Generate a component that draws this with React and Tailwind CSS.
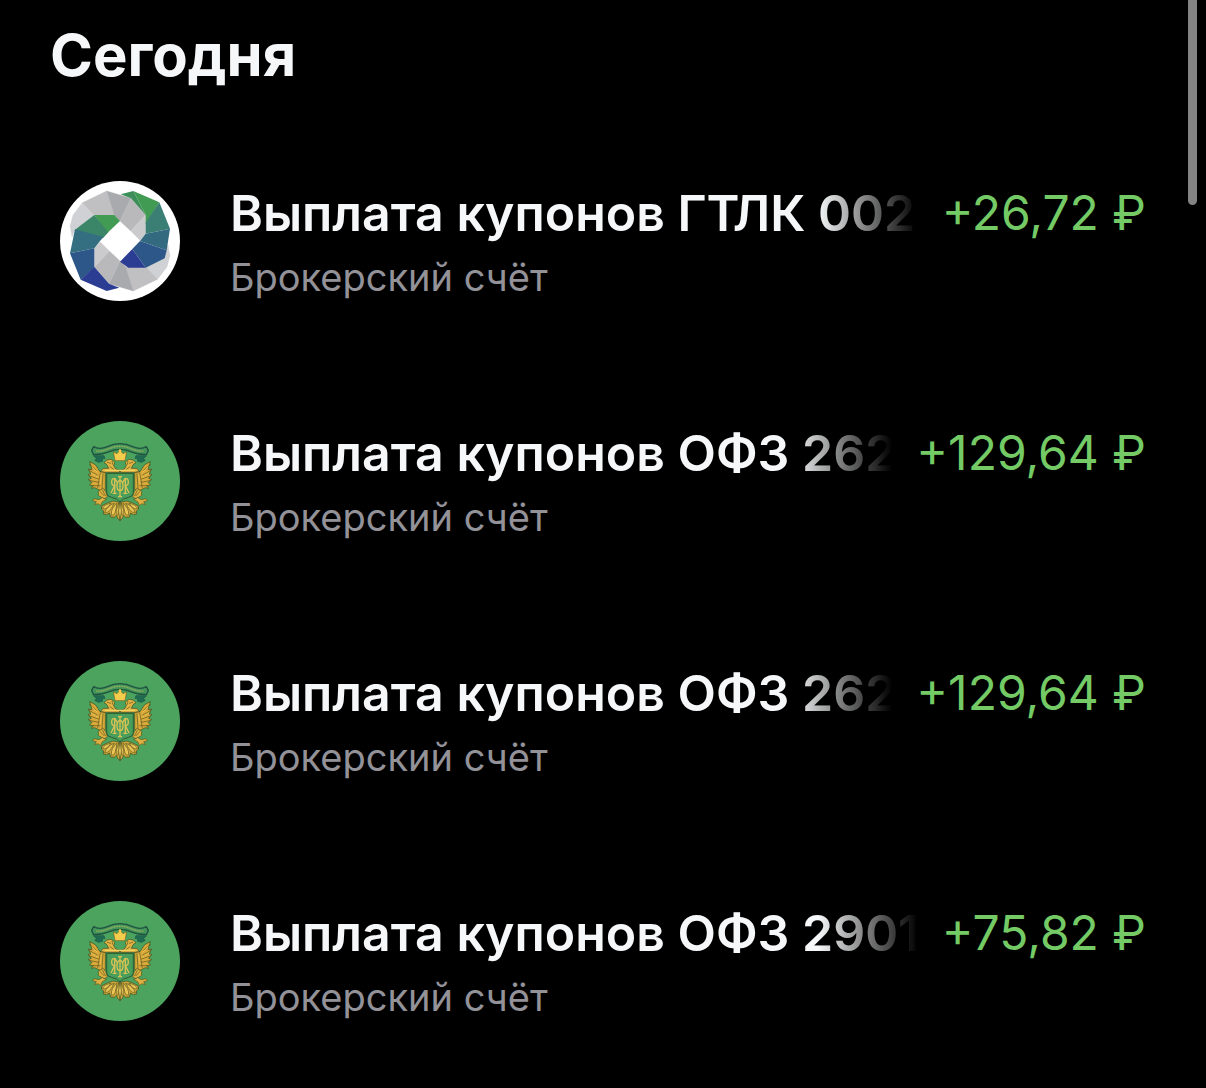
const payouts = [
  { id: 1, title: "Выплата купонов ГТЛК 002Р", account: "Брокерский счёт", amount: "+26,72 ₽", logo: "gtlk" },
  { id: 2, title: "Выплата купонов ОФЗ 262", account: "Брокерский счёт", amount: "+129,64 ₽", logo: "ofz" },
  { id: 3, title: "Выплата купонов ОФЗ 262", account: "Брокерский счёт", amount: "+129,64 ₽", logo: "ofz" },
  { id: 4, title: "Выплата купонов ОФЗ 2901", account: "Брокерский счёт", amount: "+75,82 ₽", logo: "ofz" },
];

// Half of the grey band, the other half is the same turned by 180°
function GreyBand() {
  return (
    <g strokeWidth="1" strokeLinejoin="round">
      <path d="M97 95 L133 133 L76 177 L66 198 L60 166 L69 132Z" fill="#d0d1d5" stroke="#d0d1d5" />
      <path d="M97 95 L170 60 L193 133 H133Z" fill="#c0c0c3" stroke="#c0c0c3" />
      <path d="M170 60 L243 82 L210 150 L193 133Z" fill="#a9aaad" stroke="#a9aaad" />
      <path d="M243 82 L287 132 L242 180 L210 150Z" fill="#b9b9bc" stroke="#b9b9bc" />
      <path d="M287 132 V188 L270 208 L242 180Z" fill="#cbcbce" stroke="#cbcbce" />
    </g>
  );
}

function GtlkLogo() {
  return (
    <svg viewBox="30 30 360 360" className="size-[120px] shrink-0" aria-hidden="true">
      <circle cx="210" cy="210" r="180" fill="#fff" />
      <GreyBand />
      <g transform="rotate(180 210 210)">
        <GreyBand />
      </g>
      {/* Right blade */}
      <path d="M212 70 L250 60 L287 132 L243 82Z" fill="#3c8e58" />
      <path d="M250 60 L328 94 L287 160 V132Z" fill="#429b53" />
      <path d="M328 94 L360 173 L287 188 V155Z" fill="#3b7f74" />
      <path d="M360 173 L350 238 L270 210 L287 188Z" fill="#336a80" />
      <path d="M350 238 L344 262 L287 290 L247 234 L270 210Z" fill="#2c5788" />
      <path d="M247 234 L287 290 H235 L210 272Z" fill="#2b3d92" />
      {/* Left blade */}
      <path d="M133 132 H193 L210 150 L172 186Z" fill="#429b53" />
      <path d="M133 132 L175 184 L160 200 L74 177Z" fill="#3b8669" />
      <path d="M75 175 L161 198 L150 210 L133 232 L60 247Z" fill="#336f80" />
      <path d="M133 232 V290 L92 326 L60 247Z" fill="#2c5788" />
      <path d="M133 288 L177 338 L208 350 L170 360 L92 326Z" fill="#2b3d92" />
    </svg>
  );
}

// Wing, leg and tail feathers of one side of the eagle
function EagleHalf() {
  return (
    <g stroke="#59591f" strokeWidth="2" strokeLinejoin="round" strokeLinecap="round">
      <path d="M131 134 L162 134 L165 142 L156 144 L158 151 L145 154 L134 148 L139 143Z" fill="#1f6c52" stroke="#1d5a47" />
      <path d="M120 152 L137 162 L146 176 L150 182 L166 183 L166 236 L150 238 L134 230 L124 232 L130 224 L118 222 L126 214 L115 206 L124 202 L114 190 L123 189 L115 174 L125 176Z" fill="#d9a93a" stroke="#3f4a1e" />
      <path d="M118 160 L139 178 M117 178 L142 192 M117 194 L145 204 M120 209 L148 214 M128 224 L150 224 M151 186 L143 230 M159 188 L156 234" fill="none" />
      <path d="M126 168 L142 184 M124 186 L142 198 M154 190 L150 218" fill="none" stroke="#f0cc5c" />
      <path d="M152 181 L160 172 L176 172 L170 160 L162 155 L171 147 L184 145 L194 154 L191 164 L197 174 L209 178 V184 H166Z" fill="#e3b443" stroke="#3f4a1e" />
      <path d="M172 154 L182 157 M180 167 L192 176 M186 150 L188 160" fill="none" />
      <path d="M166 178 H209" fill="none" stroke="#f4d264" strokeWidth="4" />
      <path d="M146 240 L160 232 L168 244 L172 258 L160 264 L154 258 L146 254Z" fill="#e0b040" />
      <path d="M151 242 L162 254 M158 238 L166 254" fill="none" />
      <path d="M156 260 L147 266 L132 263 L128 270 L139 272 L134 281 L145 278 L151 284 L157 272 L168 266Z" fill="#e0b040" />
      <path d="M209 274 L190 270 L172 276 L156 284 L154 294 L161 300 L160 309 L170 311 L178 306 L182 318 L193 319 L199 313 L203 322 L209 328Z" fill="#cfa53a" stroke="#3f4a1e" />
      <g fill="#efc653">
        <path d="M206 276 Q196 296 201 312 Q206 316 207 300Z" />
        <path d="M200 277 Q182 292 184 312 Q194 316 197 298Z" />
        <path d="M192 277 Q170 286 164 306 Q176 306 184 292Z" />
        <path d="M182 277 Q164 280 157 292 Q164 298 174 288Z" />
      </g>
    </g>
  );
}

function OfzLogo() {
  return (
    <svg viewBox="30 30 360 360" className="size-[120px] shrink-0" aria-hidden="true">
      <circle cx="210" cy="210" r="180" fill="#4ba35e" />
      <EagleHalf />
      <g transform="matrix(-1 0 0 1 420 0)">
        <EagleHalf />
      </g>
      <path d="M210 274 Q202 300 210 326 Q218 300 210 274Z" fill="#f4d264" stroke="#59591f" strokeWidth="2" />
      {/* Ribbon */}
      <path
        d="M131 107 Q148 117 172 107 Q190 98 210 98 Q230 98 248 107 Q272 117 289 107 L295 118 L290 130 Q270 132 248 124 Q228 115 210 115 Q192 115 172 124 Q150 132 130 130 L125 118Z"
        fill="#43965a"
        stroke="#1f5140"
        strokeWidth="4"
        strokeLinejoin="round"
      />
      <path d="M139 120 Q155 122 174 114 Q192 106 210 106 Q228 106 246 114 Q265 122 281 120" fill="none" stroke="#a9b65c" strokeWidth="4" strokeDasharray="3 2" />
      {/* Crown */}
      <path
        d="M190 122 L201 128 L210 116 L219 128 L230 122 L225 149 H195Z"
        fill="#f6cc4c"
        stroke="#6b5f22"
        strokeWidth="2"
        strokeLinejoin="round"
      />
      <circle cx="210" cy="119" r="4" fill="#f6cc4c" />
      <path d="M197 151 H223 V160 Q210 174 197 160Z" fill="#4ba35e" />
      {/* Shield with the monogram */}
      <path
        d="M170 187 H250 V246 Q248 257 236 259 Q218 262 210 273 Q202 262 184 259 Q172 257 170 246Z"
        fill="#489e5a"
        stroke="#2c5a34"
        strokeWidth="3"
      />
      <g fill="none" stroke="#dcc255" strokeWidth="4">
        <path d="M194 202 V246 M188 247 H200 M226 202 V246 M220 247 H232" />
        <path d="M210 196 V256 M204 197 H216 M204 257 H216" />
        <path d="M194 202 C182 202 182 224 194 224 L183 246 M226 202 C238 202 238 224 226 224 L237 246" />
        <path d="M210 209 C198 209 198 239 210 239 C222 239 222 209 210 209" />
        <path d="M194 202 L204 218 M226 202 L216 218" />
      </g>
    </svg>
  );
}

function PayoutRow({ payout }) {
  return (
    <li className="flex items-start gap-[50px] pt-[60px] pb-[58px]">
      {payout.logo === "gtlk" ? <GtlkLogo /> : <OfzLogo />}

      <div className="min-w-0 flex-1">
        <div className="flex gap-6 leading-[64px] whitespace-nowrap">
          <h2 className="min-w-0 flex-1 overflow-hidden text-[50px] font-semibold text-[#f6f7f8] [mask-image:linear-gradient(to_right,#000_calc(100%_-_100px),transparent)]">
            {payout.title}
          </h2>
          <span className="text-[48px] text-[#74cb66]">{payout.amount}</span>
        </div>
        <p className="mt-[6px] text-[38px] leading-[52px] text-[#929298]">{payout.account}</p>
      </div>
    </li>
  );
}

export default function App() {
  return (
    <main className="relative min-h-screen overflow-hidden bg-black font-['Inter','Liberation_Sans',sans-serif]">
      <h1 className="px-[50px] pt-5 text-[58px] leading-[70px] font-bold text-[#f6f7f8]">Сегодня</h1>

      <ul className="mt-[31px] px-[60px]">
        {payouts.map((payout) => (
          <PayoutRow key={payout.id} payout={payout} />
        ))}
      </ul>

      {/* Scroll indicator */}
      <div className="absolute top-0 right-[9px] h-[205px] w-[9px] rounded-b-full bg-[#838383]" />
    </main>
  );
}
